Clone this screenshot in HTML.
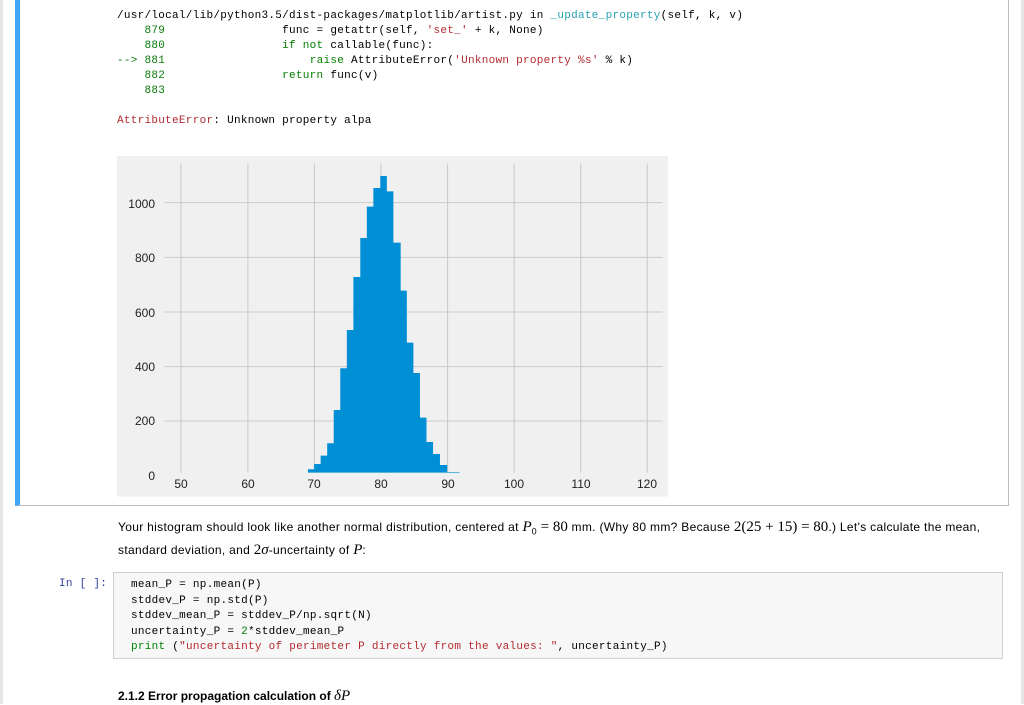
<!DOCTYPE html>
<html><head><style>
body{margin:0;width:1024px;height:704px;background:#fff;position:relative;overflow:hidden;font-family:"Liberation Sans",sans-serif;}
.lb{position:absolute;left:0;top:0;width:3px;height:704px;background:#e6e6e6}
.rb{position:absolute;left:1021px;top:0;width:3px;height:704px;background:#e6e6e6}
.cell{position:absolute;left:15px;top:-2px;width:994px;height:508px;border:1px solid #bdbdbd;border-left:5px solid #42a5f5;box-sizing:border-box}
.mono{font-family:"Liberation Mono",monospace;font-size:11px;letter-spacing:0.28px;white-space:pre;position:absolute;color:#000}
.g{color:#0b7a0b}.gr{color:#008000}.c{color:#2aa1b3}.r{color:#b22b31}.k{color:#008000}
.txt{position:absolute;left:118px;font-size:12px;color:#000;line-height:19px;letter-spacing:0.32px}
.m{font-family:"Liberation Serif",serif;font-size:15px;letter-spacing:0}
.code{position:absolute;left:113px;top:572px;width:890px;height:87px;background:#f7f7f7;border:1px solid #cfcfcf;box-sizing:border-box}
</style></head><body>
<div class="lb"></div><div class="rb"></div>
<div class="cell"></div>
<div class="mono" style="left:117px;top:9px;line-height:15px">/usr/local/lib/python3.5/dist-packages/matplotlib/artist.py in <span class="c">_update_property</span>(self, k, v)
<span class="g">    879</span>                 func = getattr(self, <span class="r">'set_'</span> + k, None)
<span class="g">    880</span>                 <span class="k">if not</span> callable(func):
<span class="g">--&gt; 881</span>                     <span class="k">raise</span> AttributeError(<span class="r">'Unknown property %s'</span> % k)
<span class="g">    882</span>                 <span class="k">return</span> func(v)
<span class="g">    883</span>

<span class="r">AttributeError</span>: Unknown property alpa</div>
<svg style="position:absolute;left:0;top:0" width="1024" height="704">
<g transform="translate(109.7,150) scale(0.3637,0.3333)">
<rect x="20" y="18" width="1515" height="1022" fill="#f0f0f0"/>
<g stroke="#cbcbcb" stroke-width="3">
<line x1="196" y1="40" x2="196" y2="968"/><line x1="380" y1="40" x2="380" y2="968"/><line x1="563" y1="40" x2="563" y2="968"/><line x1="746" y1="40" x2="746" y2="968"/><line x1="929" y1="40" x2="929" y2="968"/><line x1="1112" y1="40" x2="1112" y2="968"/><line x1="1295" y1="40" x2="1295" y2="968"/><line x1="1478" y1="40" x2="1478" y2="968"/>
<line x1="150" y1="158" x2="1520" y2="158"/><line x1="150" y1="322" x2="1520" y2="322"/><line x1="150" y1="486" x2="1520" y2="486"/><line x1="150" y1="650" x2="1520" y2="650"/><line x1="150" y1="813" x2="1520" y2="813"/>
</g>
<path fill="#008fd5" d="M545 968V958H562V942H580V917H598V880H616V780H634V655H652V540H670V381H689V264H707V170H725V114H744V78H762V124H780V278H800V422H817V578H835V669H853V803H871V876H889V912H908V945H928V966H962V968Z"/>
</g>
<g font-size="12" fill="#222" font-family="Liberation Sans,sans-serif">
<g text-anchor="end"><text x="155" y="208">1000</text><text x="155" y="262">800</text><text x="155" y="317">600</text><text x="155" y="371">400</text><text x="155" y="425">200</text><text x="155" y="480">0</text></g>
<g text-anchor="middle"><text x="181" y="488">50</text><text x="248" y="488">60</text><text x="314" y="488">70</text><text x="381" y="488">80</text><text x="448" y="488">90</text><text x="514" y="488">100</text><text x="581" y="488">110</text><text x="647" y="488">120</text></g>
</g></svg>
<div class="txt" style="top:518px">Your histogram should look like another normal distribution, centered at <i class="m">P</i><sub style="font-size:9px">0</sub> <span class="m">= 80</span> mm. (Why 80 mm? Because <span class="m">2(25 + 15) = 80</span>.) Let's calculate the mean,<br>standard deviation, and <span class="m">2<i>σ</i></span>-uncertainty of <i class="m">P</i>:</div>
<div class="mono" style="left:59px;top:578px;color:#303f9f">In [ ]:</div>
<div class="code"></div>
<div class="mono" style="left:131px;top:578px;line-height:15.5px">mean_P = np.mean(P)
stddev_P = np.std(P)
stddev_mean_P = stddev_P/np.sqrt(N)
uncertainty_P = <span class="gr">2</span>*stddev_mean_P
<span class="k">print</span> (<span class="r">"uncertainty of perimeter P directly from the values: "</span>, uncertainty_P)</div>
<div style="position:absolute;left:118px;top:688px;font-size:12px;font-weight:bold">2.1.2 Error propagation calculation of <i class="m" style="font-weight:normal">δP</i></div>
</body></html>
